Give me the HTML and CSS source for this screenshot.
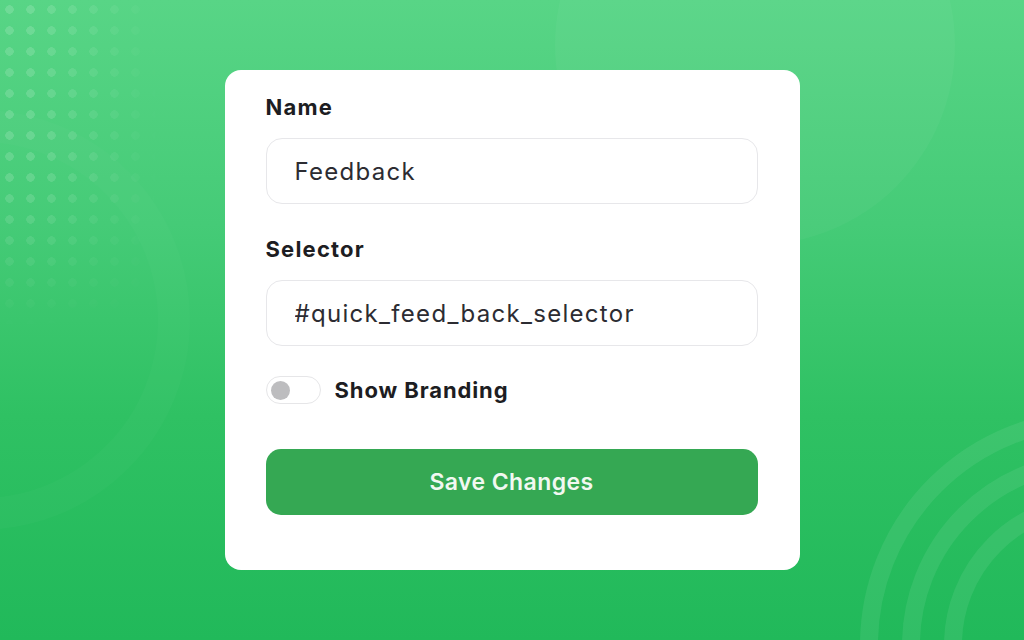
FILE: index.html
```html
<!DOCTYPE html>
<html>
<head>
  <meta name="viewport" content="width=device-width, initial-scale=1">
  <title>Widget Settings</title>
  <link rel="stylesheet" href="styles.css">
</head>
<body>
  <!-- background decoration, clipped to the window, sits behind the card -->
  <div class="backdrop">
    <div class="deco deco-dots"></div>
    <div class="deco deco-ring-left"></div>
    <div class="deco deco-blob"></div>
    <div class="deco deco-ring deco-ring-1"></div>
    <div class="deco deco-ring deco-ring-2"></div>
    <div class="deco deco-ring deco-ring-3"></div>
  </div>

  <main class="stage">
    <form class="settings-card">
      <label class="field-label" for="name-input">Name</label>
      <input class="field-input" id="name-input" type="text" value="Feedback">

      <label class="field-label" for="selector-input">Selector</label>
      <input class="field-input" id="selector-input" type="text" value="#quick_feed_back_selector">

      <div class="toggle-row">
        <span class="toggle"><span class="toggle-knob"></span></span>
        <span class="toggle-text">Show Branding</span>
      </div>

      <button class="save-button" type="button">Save Changes</button>
    </form>
  </main>
</body>
</html>
```

FILE: styles.css
```css
html {
  height: 100%;
  width: 100%;
}

body {
  margin: 0;
  height: 100%;
  width: 100%;
  overflow: hidden;
  position: relative;
  font-family: Inter, "Open Sans", sans-serif;
  background: linear-gradient(180deg, #58d586 0%, #45cb77 35%, #2fc163 65%, #21b95a 100%);
}

/* decorations */
.backdrop {
  position: absolute;
  top: 0;
  left: 0;
  right: 0;
  bottom: 0;
  overflow: hidden;
}

.deco {
  position: absolute;
  pointer-events: none;
}

.deco-dots {
  left: 0;
  top: 0;
  width: 160px;
  height: 330px;
  background-image: radial-gradient(circle, rgba(255, 255, 255, 0.15) 4px, transparent 4.5px);
  background-size: 21px 21px;
  background-position: -1px -1px;
  -webkit-mask-image: linear-gradient(90deg, #000 20%, transparent 100%), linear-gradient(180deg, #000 55%, transparent 100%);
  -webkit-mask-composite: source-in;
  mask-image: linear-gradient(90deg, #000 20%, transparent 100%), linear-gradient(180deg, #000 55%, transparent 100%);
  mask-composite: intersect;
}

.deco-ring-left {
  left: -230px;
  top: 110px;
  width: 420px;
  height: 420px;
  border-radius: 50%;
  border: 32px solid rgba(255, 255, 255, 0.02);
  box-sizing: border-box;
}

.deco-blob {
  left: 555px;
  top: -155px;
  width: 400px;
  height: 400px;
  border-radius: 50%;
  background: rgba(255, 255, 255, 0.035);
}

.deco-ring {
  border-radius: 50%;
  border: 18px solid rgba(255, 255, 255, 0.075);
  box-sizing: border-box;
}

.deco-ring-1 {
  left: 860px;
  top: 410px;
  width: 470px;
  height: 470px;
}

.deco-ring-2 {
  left: 902px;
  top: 452px;
  width: 386px;
  height: 386px;
}

.deco-ring-3 {
  left: 944px;
  top: 494px;
  width: 302px;
  height: 302px;
}

/* card */
.stage {
  position: relative;
  z-index: 1;
  height: 100%;
  display: flex;
  align-items: center;
  justify-content: center;
}

.settings-card {
  width: 575px;
  height: 500px;
  box-sizing: border-box;
  padding: 23px 42px 0 41px;
  background-color: #ffffff;
  border-radius: 16px;
  display: flex;
  flex-direction: column;
}

.field-label {
  display: block;
  font-size: 22px;
  line-height: 28px;
  font-weight: 700;
  color: #1d1d22;
  letter-spacing: 1.2px;
  margin-bottom: 17px;
}

.field-input {
  display: block;
  height: 66px;
  box-sizing: border-box;
  padding: 0 28px;
  border: 1px solid #e7e7ea;
  border-radius: 16px;
  background-color: #ffffff;
  font-family: Inter, "Open Sans", sans-serif;
  font-size: 24px;
  letter-spacing: 1.3px;
  color: #2c2c32;
  margin-bottom: 31px;
  outline: none;
}

#selector-input {
  margin-bottom: 30px;
}

.toggle-row {
  display: flex;
  align-items: center;
  gap: 14px;
  height: 28px;
}

.toggle {
  display: inline-flex;
  align-items: center;
  width: 55px;
  height: 28px;
  box-sizing: border-box;
  padding-left: 4px;
  border: 1px solid #e6e6e8;
  border-radius: 14px;
  background-color: #ffffff;
}

.toggle-knob {
  width: 19px;
  height: 19px;
  border-radius: 50%;
  background-color: #bdbdbf;
}

.toggle-text {
  font-size: 22px;
  font-weight: 700;
  color: #1d1d22;
  letter-spacing: 0.9px;
}

.save-button {
  margin-top: 45px;
  height: 66px;
  border: none;
  border-radius: 15px;
  background-color: #35a853;
  color: #f1f8f1;
  font-family: Inter, "Open Sans", sans-serif;
  font-size: 23px;
  font-weight: 600;
  letter-spacing: 0.4px;
  cursor: pointer;
}
```
